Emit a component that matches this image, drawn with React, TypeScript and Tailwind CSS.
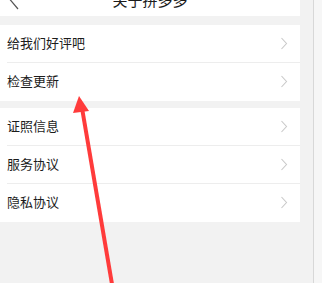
import React from "react";

const Chevron = () => (
  <svg width="8" height="13" viewBox="0 0 8 13" className="shrink-0">
    <path d="M1.5 1 L6.5 6.5 L1.5 12" fill="none" stroke="#c9c9c9" strokeWidth="1.1" />
  </svg>
);

const Row = ({ label, last }: { label: string; last?: boolean }) => (
  <div className="pl-[7px]">
    <div
      className={
        "flex items-center justify-between h-[38px] pr-[12px] " +
        (last ? "" : "border-b border-[#ededed]")
      }
    >
      <span className="text-[13px] text-[#1c1c1c] leading-none pb-[3px]">{label}</span>
      <span className="pb-[1px]">
        <Chevron />
      </span>
    </div>
  </div>
);

export default function App() {
  return (
    <div
      className="relative w-[322px] h-[283px] overflow-hidden flex bg-[#f2f2f2]"
      style={{ fontFamily: '"Noto Sans CJK SC", "Noto Sans", sans-serif' }}
    >
      <div className="w-[300px] flex flex-col">
        <div className="relative h-[34px] mt-[-18px] bg-white flex items-center justify-center">
          <svg className="absolute left-[4px] top-[8px]" width="20" height="20" viewBox="0 0 20 20">
            <path d="M14 0 L6 9.5 L14 19" fill="none" stroke="#555" strokeWidth="1.2" />
          </svg>
          <span className="text-[15px] text-[#1c1c1c] leading-none">关于拼多多</span>
        </div>
        <div className="h-[9px]" />
        <div className="bg-white">
          <Row label="给我们好评吧" />
          <Row label="检查更新" last />
        </div>
        <div className="h-[7px]" />
        <div className="bg-white">
          <Row label="证照信息" />
          <Row label="服务协议" />
          <Row label="隐私协议" last />
        </div>
      </div>
      <div className="w-[13px]" />
      <div className="w-px bg-[#d8d8d8]" />
      <div className="flex-1 bg-[#f6f6f6]" />
      <svg className="absolute left-0 top-0 pointer-events-none" width="322" height="283" viewBox="0 0 322 283">
        <line x1="113" y1="290" x2="82" y2="108" stroke="#ff3b3b" strokeWidth="4" />
        <polygon points="79,96 73,113 89,111" fill="#ff3b3b" />
      </svg>
    </div>
  );
}
